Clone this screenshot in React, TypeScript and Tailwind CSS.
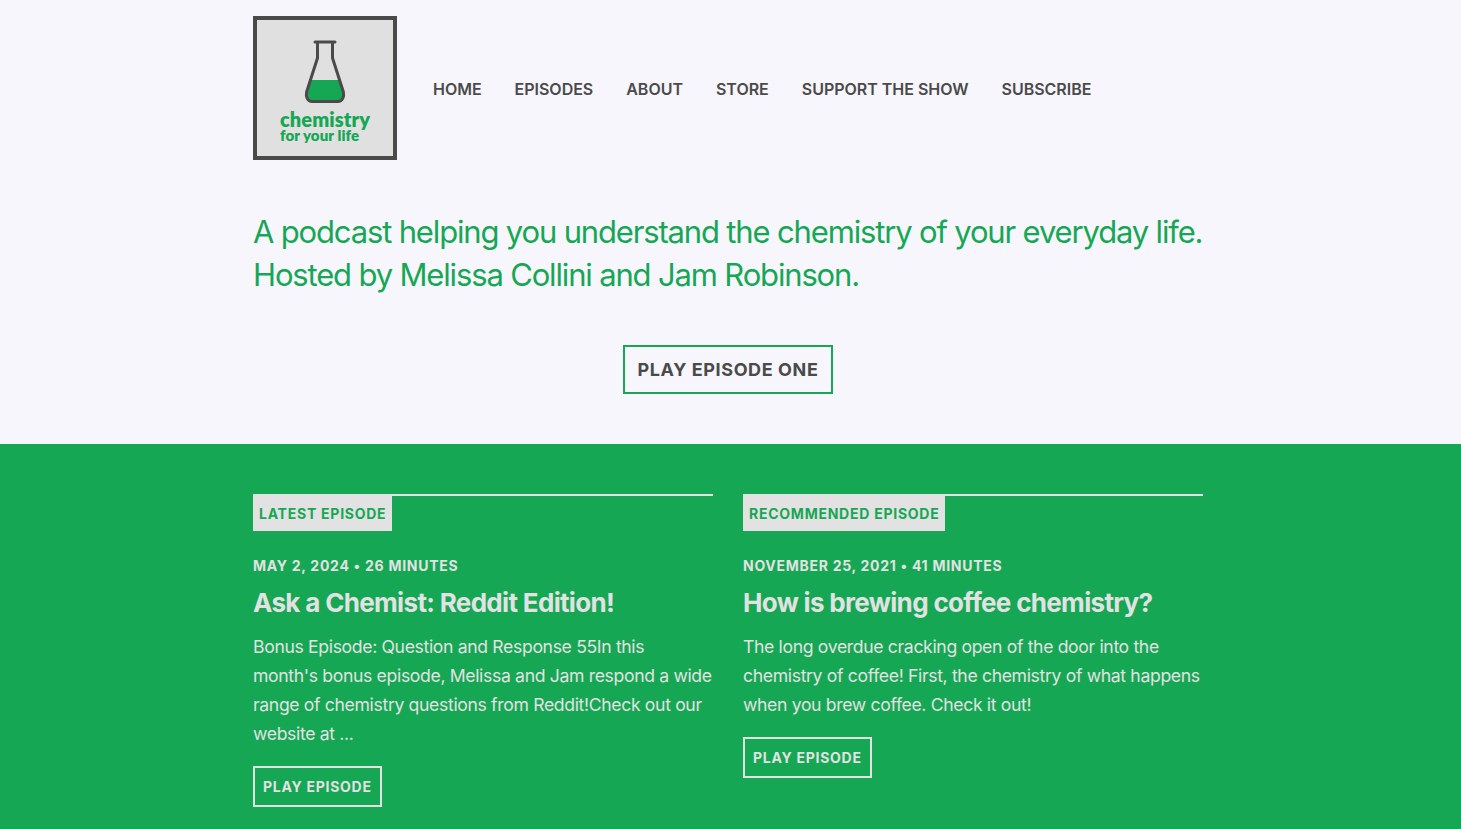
const navLinks = ["HOME", "EPISODES", "ABOUT", "STORE", "SUPPORT THE SHOW", "SUBSCRIBE"];

const episodes = [
  {
    label: "LATEST EPISODE",
    meta: "MAY 2, 2024 • 26 MINUTES",
    title: "Ask a Chemist: Reddit Edition!",
    text: "Bonus Episode: Question and Response 55In this month's bonus episode, Melissa and Jam respond a wide range of chemistry questions from Reddit!Check out our website at ...",
  },
  {
    label: "RECOMMENDED EPISODE",
    meta: "NOVEMBER 25, 2021 • 41 MINUTES",
    title: "How is brewing coffee chemistry?",
    text: "The long overdue cracking open of the door into the chemistry of coffee! First, the chemistry of what happens when you brew coffee. Check it out!",
  },
];

const Logo = () => (
  <div className="flex h-[144px] w-[144px] shrink-0 flex-col items-center border-4 border-[#4a4a4a] bg-[#e0e0e0]">
    <svg width="42" height="66" viewBox="0 0 42 66" className="mt-[20px]">
      <path
        d="M2.6 52 C1.6 57 3.6 61.5 8 61.5 H34 C38.4 61.5 40.4 57 39.4 52 L35.6 40 H6.4 Z"
        fill="#16a755"
      />
      <path
        d="M11 2 H31 M13.5 2 V18 L2.6 52 C1.6 57 3.6 61.5 8 61.5 H34 C38.4 61.5 40.4 57 39.4 52 L28.5 18 V2"
        fill="none"
        stroke="#4a4a4a"
        strokeWidth="3"
        strokeLinecap="round"
        strokeLinejoin="round"
      />
    </svg>
    <div className="mt-[5px] w-[90px] font-['Lato',sans-serif] font-extrabold text-[#16a755]">
      <div className="text-[20px] leading-[17px] tracking-[0.1px]">chemistry</div>
      <div className="text-[15px] leading-[14px] tracking-[0.1px]">for your life</div>
    </div>
  </div>
);

const EpisodeCard = ({ episode }: { episode: (typeof episodes)[number] }) => (
  <div>
    <div className="border-t-2 border-[#e2e2e2]">
      <span className="inline-block bg-[#e2e2e2] px-[6px] pt-[8px] pb-[8px] text-[14px] leading-[19px] font-bold tracking-[0.75px] text-[#16a755]">
        {episode.label}
      </span>
    </div>
    <div className="mt-[25px] text-[14px] leading-[20px] font-bold tracking-[0.72px] text-[#e2e2e2]">
      {episode.meta}
    </div>
    <h2 className="mt-[9px] text-[26px] leading-[36px] font-bold tracking-[-0.67px] text-[#e2e2e2]">
      {episode.title}
    </h2>
    <p className="mt-[11px] text-[17.6px] leading-[29px] tracking-[-0.34px] text-[#e2e2e2]">
      {episode.text}
    </p>
    <button className="mt-[18px] block h-[41px] border-2 border-[#e2e2e2] px-[8px] text-[14px] font-bold tracking-[0.72px] text-[#e2e2e2]">
      PLAY EPISODE
    </button>
  </div>
);

export default function App() {
  return (
    <div className="h-screen overflow-hidden bg-[#f6f6fc] font-['Inter',sans-serif]">
      <div className="pr-[5px]">
        <div className="mx-auto w-[950px] pt-[16px]">
          <header className="flex items-center">
            <Logo />
            <nav className="mt-[2px] ml-[36px] flex gap-[33px] text-[16px] font-semibold tracking-[-0.02px] text-[#4a4a4a]">
              {navLinks.map((link) => (
                <a key={link}>{link}</a>
              ))}
            </nav>
          </header>
          <p className="mt-[50px] text-[31px] leading-[43px] tracking-[-1.16px] whitespace-nowrap text-[#16a755]">
            A podcast helping you understand the chemistry of your everyday life.
            <br />
            Hosted by Melissa Collini and Jam Robinson.
          </p>
          <div className="mt-[49px] flex justify-center">
            <button className="h-[49px] border-2 border-[#16a755] px-[13px] text-[18px] font-bold tracking-[0.6px] text-[#4a4a4a]">
              PLAY EPISODE ONE
            </button>
          </div>
        </div>
      </div>
      <section className="mt-[50px] bg-[#16a755] pt-[50px] pb-[50px] pr-[5px]">
        <div className="mx-auto grid w-[950px] grid-cols-2 items-start gap-[30px]">
          {episodes.map((episode) => (
            <EpisodeCard key={episode.label} episode={episode} />
          ))}
        </div>
      </section>
    </div>
  );
}
